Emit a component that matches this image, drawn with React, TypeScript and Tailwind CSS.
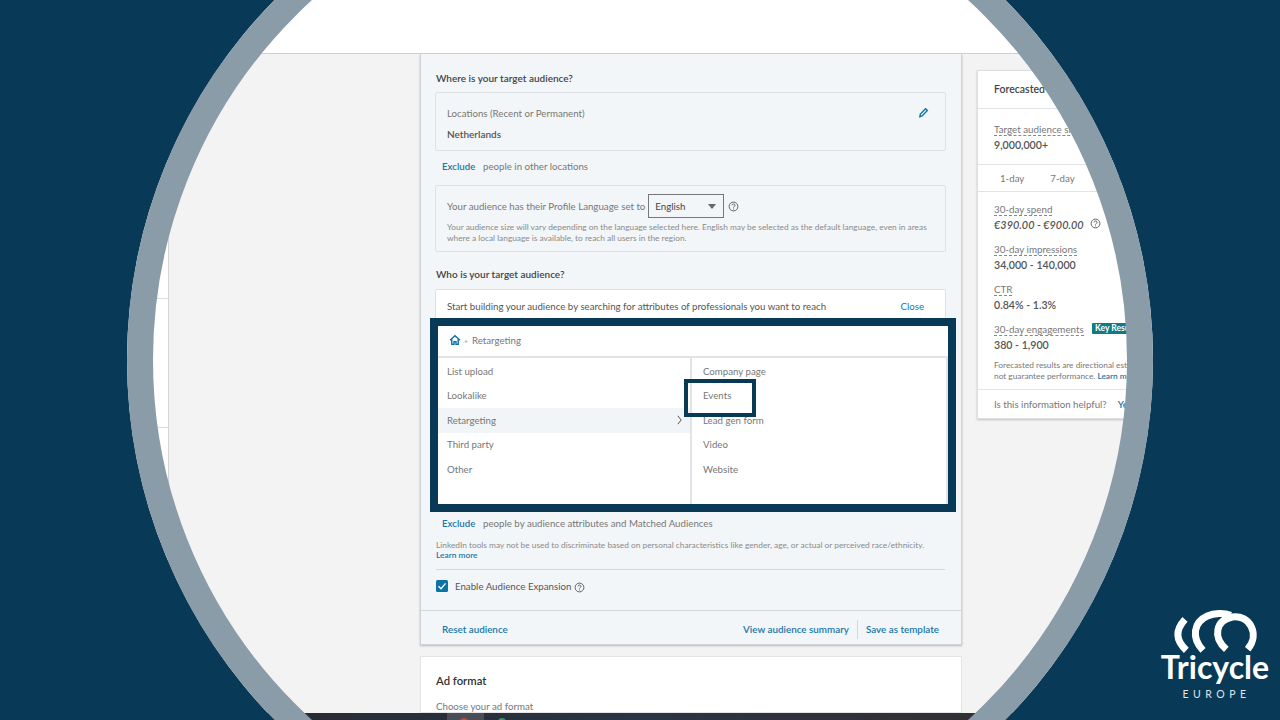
import React from "react";

const HelpIcon = ({ className = "" }: { className?: string }) => (
  <svg viewBox="0 0 12 12" className={`h-[11px] w-[11px] shrink-0 ${className}`} fill="none" stroke="#555" strokeWidth="1">
    <circle cx="6" cy="6" r="4.8" />
    <path d="M4.4 4.8c0-2 3.3-2 3.3 0 0 1.2-1.7 1.2-1.7 2.4" />
    <path d="M6 8.2v1" />
  </svg>
);

const Stat = ({ label, value, className = "" }: { label: string; value: string; className?: string }) => (
  <div className={`flex flex-col items-start ${className}`}>
    <span className="border-b border-dashed border-[#888] text-[9.8px] leading-[12px] text-[#777]">{label}</span>
    <span className="mt-[2px] text-[10.6px] font-semibold leading-[14px] text-[#555]">{value}</span>
  </div>
);

const leftItems = ["List upload", "Lookalike", "Retargeting", "Third party", "Other"];
const rightItems = ["Company page", "Events", "Lead gen form", "Video", "Website"];

const AudienceMenu = () => (
  <div className="relative ml-[-5px] w-[526px] border-[8px] border-[#083a57] bg-white">
    <div className="flex h-[32px] items-center gap-[4px] border-b-2 border-[#e1e4e6] pb-[2px] pl-[11px] text-[9.7px] text-[#777]">
      <svg viewBox="0 0 12 12" className="h-[12px] w-[12px]" fill="none" stroke="#0a73a8" strokeWidth="1.4">
        <path d="M1 6.2 6 1.8l5 4.4M2.8 5.2v5.2h2.2V7.6h2v2.8h2.2V5.2" />
      </svg>
      <span className="text-[6px] text-[#bbb]">&#9656;</span>
      <span>Retargeting</span>
    </div>
    <div className="flex h-[146px]">
      <div className="w-[254px] border-r-2 border-[#e1e4e6] pt-[1px]">
        {leftItems.map((item) => (
          <div
            key={item}
            className={`flex h-[24.5px] items-center justify-between pl-[9px] pr-[8px] text-[9.7px] text-[#777] ${item === "Retargeting" ? "bg-[#f1f5f8]" : ""}`}
          >
            {item}
            {item === "Retargeting" && (
              <svg viewBox="0 0 6 12" className="h-[10px] w-[5px]" fill="none" stroke="#555" strokeWidth="1.2">
                <path d="M1 1l4 5-4 5" />
              </svg>
            )}
          </div>
        ))}
      </div>
      <div className="flex-1 border-r-2 border-[#e1e4e6] pt-[1px]">
        {rightItems.map((item) => (
          <div key={item} className="flex h-[24.5px] items-center pl-[11px] text-[9.7px] text-[#777]">
            {item}
          </div>
        ))}
      </div>
    </div>
    {/* Events callout */}
    <div className="absolute left-[246px] top-[53px] h-[38px] w-[72px] border-4 border-[#083a57]" />
  </div>
);

const MainPanel = () => (
  <div className="h-[591px] w-[542px] shrink-0 border-x border-b border-[#d0d3d6] bg-[#f3f6f8] shadow-[0_1px_2px_rgba(0,0,0,0.25)]">
    <div className="w-[526px] pl-[14px]">
      <div className="ml-[1px] mt-[17px] text-[10px] font-semibold leading-[14px] text-[#444]">Where is your target audience?</div>
      <div className="mt-[7px] h-[59px] w-[511px] rounded-[2px] border border-[#dde1e4] px-[11px]">
        <div className="mt-[13px] flex items-center justify-between text-[9.7px] leading-[14px] text-[#777]">
          Locations (Recent or Permanent)
          <svg viewBox="0 0 12 12" className="mb-[2px] mr-[5px] h-[11px] w-[11px]" fill="none" stroke="#0a73a8" strokeWidth="1.5">
            <path d="M2 10.5 2.6 7.6 8.2 1.8l2 2-5.7 5.9z" />
          </svg>
        </div>
        <div className="mt-[7px] text-[10px] font-semibold leading-[14px] text-[#555]">Netherlands</div>
      </div>
      <div className="ml-[7px] mt-[8px] flex text-[9.7px] leading-[14px] text-[#777]">
        <span className="w-[41px] font-semibold text-[#1a76a8]">Exclude</span>
        people in other locations
      </div>
      <div className="mt-[12px] h-[67px] w-[511px] rounded-[2px] border border-[#dde1e4] px-[11px]">
        <div className="mt-[8px] flex items-center text-[9.7px] text-[#777]">
          Your audience has their Profile Language set to
          <div className="ml-[3px] flex h-[24px] w-[76px] items-center justify-between border border-[#777] px-[6px] text-[#444]">
            English
            <span className="mr-[1px] h-0 w-0 border-x-[4px] border-t-[5px] border-x-transparent border-t-[#666]" />
          </div>
          <HelpIcon className="ml-[4px]" />
        </div>
        <div className="mt-[4px] whitespace-nowrap text-[8.33px] leading-[11px] text-[#8a8a8a]">
          Your audience size will vary depending on the language selected here. English may be selected as the default language, even in areas
          <br />
          where a local language is available, to reach all users in the region.
        </div>
      </div>
      <div className="ml-[1px] mt-[15px] text-[10px] font-semibold leading-[14px] text-[#444]">Who is your target audience?</div>
      <div className="mt-[8px] flex h-[29px] w-[511px] justify-between rounded-t-[2px] border-x border-t border-[#dde1e4] bg-white pl-[11px] pr-[21px] pt-[9px] text-[9.7px] leading-[14px] text-[#555]">
        Start building your audience by searching for attributes of professionals you want to reach
        <span className="text-[#1a76a8]">Close</span>
      </div>
      <AudienceMenu />
      <div className="ml-[7px] mt-[4px] flex text-[9.7px] leading-[14px] text-[#777]">
        <span className="w-[41px] font-semibold text-[#1a76a8]">Exclude</span>
        people by audience attributes and Matched Audiences
      </div>
      <div className="ml-[1px] mt-[10px] whitespace-nowrap text-[8.33px] leading-[10px] text-[#8a8a8a]">
        LinkedIn tools may not be used to discriminate based on personal characteristics like gender, age, or actual or perceived race/ethnicity.
        <br />
        <span className="font-semibold text-[#1a76a8]">Learn more</span>
      </div>
      <div className="ml-[1px] mt-[9px] w-[509px] border-t border-[#d5d8da]" />
      <div className="ml-[1px] mt-[9px] flex items-center text-[9.7px] leading-[14px] text-[#555]">
        <svg viewBox="0 0 12 12" className="h-[12px] w-[12px]">
          <rect width="12" height="12" rx="1.5" fill="#0a73a8" />
          <path d="M2.5 6.2 5 8.7l4.5-5.4" fill="none" stroke="#fff" strokeWidth="1.3" />
        </svg>
        <span className="ml-[7px]">Enable Audience Expansion</span>
        <HelpIcon className="ml-[3px] mt-[2px]" />
      </div>
    </div>
    <div className="mt-[17px] flex h-[34px] items-center justify-between border-t border-[#d5d8da] pl-[21px] pr-[22px] pt-[3px] text-[9.85px] font-semibold text-[#1a76a8]">
      <span>Reset audience</span>
      <div className="flex items-center">
        <span>View audience summary</span>
        <span className="mx-[8px] h-[19px] w-px bg-[#d5d8da]" />
        <span>Save as template</span>
      </div>
    </div>
  </div>
);

const ForecastCard = () => (
  <div className="ml-[15px] mt-[16px] h-[349px] w-[240px] shrink-0 border border-[#dcdfe1] bg-white shadow-[0_1px_2px_rgba(0,0,0,0.2)]">
    <div className="flex h-[38px] items-center border-b border-[#e1e4e6] pl-[16px] pt-[1px] text-[10.5px] font-semibold text-[#444]">Forecasted results</div>
    <Stat label="Target audience size" value="9,000,000+" className="ml-[16px] mt-[14px]" />
    <div className="mt-[12px] flex h-[28px] items-center gap-[26px] border-y border-[#e1e4e6] pl-[22px] pt-[1px] text-[9.7px] text-[#777]">
      <span>1-day</span>
      <span>7-day</span>
      <span>30-day</span>
    </div>
    <div className="ml-[16px] mt-[11px] flex flex-col items-start">
      <span className="border-b border-dashed border-[#888] text-[9.8px] leading-[12px] text-[#777]">30-day spend</span>
      <span className="mt-[2px] flex items-center gap-[6px] text-[10.9px] font-semibold italic leading-[14px] text-[#555]">
        €390.00 - €900.00
        <HelpIcon className="mb-[3px]" />
      </span>
    </div>
    <Stat label="30-day impressions" value="34,000 - 140,000" className="ml-[16px] mt-[11px]" />
    <Stat label="CTR" value="0.84% - 1.3%" className="ml-[16px] mt-[11px]" />
    <div className="relative">
      <Stat label="30-day engagements" value="380 - 1,900" className="ml-[16px] mt-[11px]" />
      <span className="absolute left-[114px] top-[0px] rounded-[1px] bg-[#0d7c86] px-[3px] text-[8.5px] font-bold leading-[11px] text-white">Key Results</span>
    </div>
    <div className="ml-[16px] mt-[8px] whitespace-nowrap text-[8.3px] leading-[11px] text-[#777]">
      Forecasted results are directional estimates and do
      <br />
      not guarantee performance. <span className="font-semibold text-[#1a76a8]">Learn more</span>
    </div>
    <div className="mt-[7px] flex h-[28px] items-center border-t border-[#e1e4e6] pl-[16px] pt-[2px] text-[9.7px] text-[#777]">
      Is this information helpful?
      <span className="ml-[11px] font-semibold text-[#1a76a8]">Yes</span>
    </div>
  </div>
);

export default function App() {
  return (
    <div className="relative flex h-[720px] w-[1280px] flex-col overflow-hidden bg-[#f3f3f3] font-['Lato',sans-serif]">
      <div className="h-[54px] shrink-0 border-b border-[#cfcfcf] bg-white" />
      <div className="flex min-h-0 flex-1 overflow-hidden">
        <div className="w-[169px] shrink-0 border-r border-[#d5d5d5] bg-white">
          <div className="h-[245px] border-b border-[#dcdcdc]" />
          <div className="h-[129px] border-b border-[#dcdcdc]" />
        </div>
        <div className="ml-[251px] flex w-[542px] shrink-0 flex-col">
          <MainPanel />
          <div className="mt-[11px] flex-1 border border-[#e4e4e4] bg-white pl-[15px]">
            <div className="mt-[16px] text-[11.3px] font-semibold leading-[16px] text-[#333]">Ad format</div>
            <div className="mt-[11px] text-[9.7px] leading-[12px] text-[#777]">Choose your ad format</div>
          </div>
        </div>
        <ForecastCard />
      </div>
      <div className="flex h-[7px] shrink-0 bg-gradient-to-r from-[#262626] via-[#2a3444] to-[#3a2c22]">
        <div className="relative ml-[447px] h-full w-[37px] bg-[#4a4f57]">
          <span className="absolute left-[13px] top-[5px] h-[8px] w-[8px] rounded-full bg-[#d8442f]" />
        </div>
        <span className="ml-[14px] mt-[5px] h-[8px] w-[8px] rounded-full bg-[#2f9e57]" />
      </div>

      {/* circular frame over the screenshot */}
      <div className="absolute left-[127px] top-[-153px] h-[1026px] w-[1026px] rounded-full border-[26px] border-[#8a9ca8] shadow-[0_0_0_700px_#083a57]" />

      {/* logo */}
      <div className="absolute left-[1150px] top-[602px] flex w-[130px] flex-col items-center">
        <svg viewBox="0 0 390 165" className="ml-[-3px] h-[55px] w-[130px]" fill="none" stroke="#fff" strokeWidth="21">
          <path d="M108 52C78 85 80 115 112 145" />
          <path d="M162 145C125 105 135 60 175 42c20-9 50-10 70-2" />
          <path d="M232 142C190 105 200 55 250 45c50-8 85 50 46 97" />
        </svg>
        <span className="mt-[-7px] font-['Lato',sans-serif] text-[32px] font-bold leading-[34px] text-white">Tricycle</span>
        <span className="ml-[3px] mt-[3px] text-[10.5px] leading-[14px] tracking-[4.5px] text-[#dfe6ea]">EUROPE</span>
      </div>
    </div>
  );
}
